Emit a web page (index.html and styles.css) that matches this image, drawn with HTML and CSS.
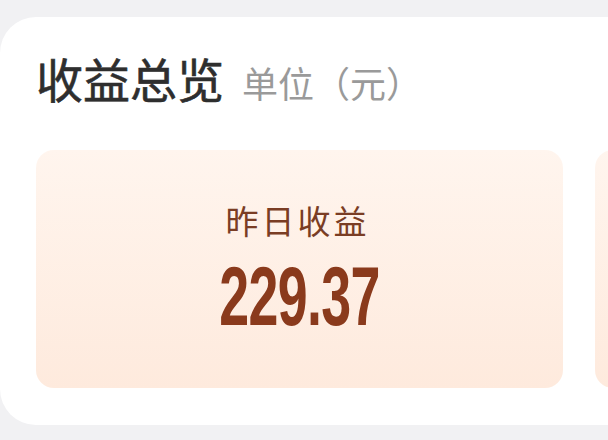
FILE: index.html
```html
<!DOCTYPE html>
<html lang="zh">
<head>
<meta charset="utf-8">
<link rel="stylesheet" href="styles.css">
</head>
<body>
<div class="panel">
  <div class="head">
    <span class="title">收益总览</span>
    <span class="unit">单位（元）</span>
  </div>
  <div class="cards">
    <div class="card">
      <div class="label">昨日收益</div>
      <div class="value"><span class="num">229.37</span></div>
    </div>
    <div class="card"></div>
  </div>
</div>
</body>
</html>
```
FILE: styles.css
```css
html, body {
  margin: 0;
  padding: 0;
}
body {
  background: #f1f1f3;
  width: 608px;
  height: 440px;
  overflow: hidden;
  font-family: "Noto Sans CJK SC", "Noto Sans", sans-serif;
}
.panel {
  margin-top: 17px;
  width: 608px;
  height: 408px;
  background: #ffffff;
  border-radius: 36px 0 0 36px;
  padding: 0 0 0 36px;
  box-sizing: border-box;
  overflow: hidden;
}
.head {
  display: flex;
  align-items: baseline;
  padding-top: 33px;
  height: 97px;
  box-sizing: border-box;
}
.title {
  font-size: 47px;
  line-height: 56px;
  font-weight: 400;
  color: #2e2e2e;
  -webkit-text-stroke: 0.6px #2e2e2e;
}
.unit {
  font-size: 36px;
  line-height: 40px;
  color: #9a9a9a;
  margin-left: 18px;
}
.cards {
  display: flex;
  gap: 32px;
  margin-top: 36px;
}
.card {
  flex: 0 0 527px;
  height: 238px;
  box-sizing: border-box;
  padding-bottom: 7px;
  border-radius: 18px;
  background: linear-gradient(180deg, #fff5ee 0%, #feeadd 100%);
  display: flex;
  flex-direction: column;
  align-items: center;
  justify-content: center;
}
.label {
  font-size: 33px;
  line-height: 40px;
  color: #7a3d24;
  letter-spacing: 3px;
  margin-left: -4px;
}
.value {
  margin-top: 21px;
  height: 70px;
  display: flex;
  justify-content: center;
}
.num {
  display: inline-block;
  font-family: "Liberation Sans", Arial, sans-serif;
  font-weight: 700;
  font-size: 84px;
  line-height: 70px;
  color: #8a3a1c;
  transform: scaleX(0.64);
  letter-spacing: -1px;
}
```
